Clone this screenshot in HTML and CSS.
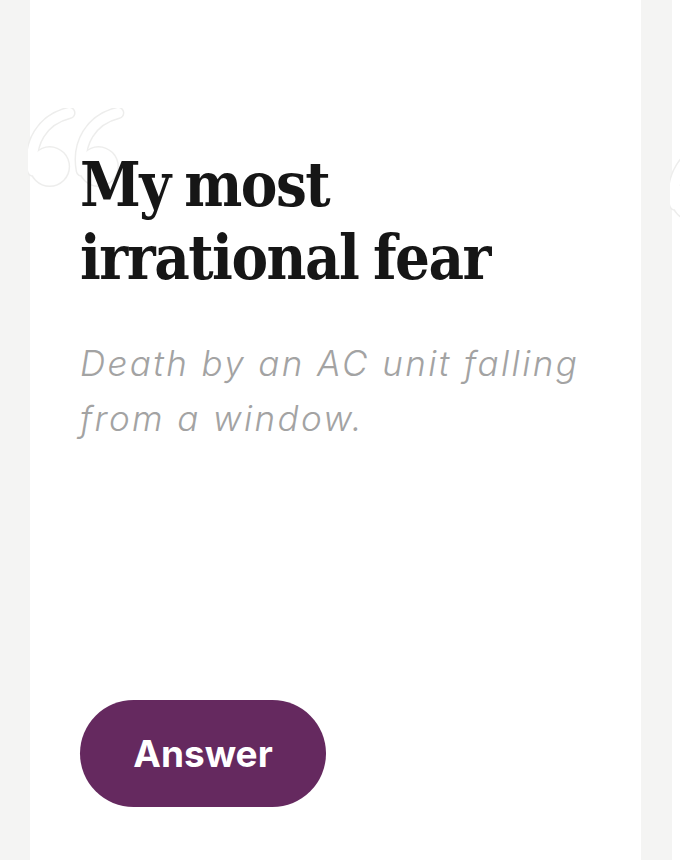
FILE: index.html
```html
<!DOCTYPE html>
<html lang="en">
<head>
<meta charset="utf-8">
<title>My most irrational fear</title>
<link rel="stylesheet" href="styles.css">
</head>
<body>
<div class="track">
  <section class="card">
    <svg class="quote" viewBox="0 0 100 84" aria-hidden="true">
      <g class="q-outer">
        <circle cx="22" cy="60" r="21"/>
        <path d="M5 64 C0 36 14 12 42 5"/>
        <circle cx="72" cy="60" r="21"/>
        <path d="M55 64 C50 36 64 12 92 5"/>
      </g>
      <g class="q-inner">
        <circle cx="22" cy="60" r="19.5"/>
        <path d="M5 64 C0 36 14 12 42 5"/>
        <circle cx="72" cy="60" r="19.5"/>
        <path d="M55 64 C50 36 64 12 92 5"/>
      </g>
    </svg>
    <h1 class="title">My most<br>irrational fear</h1>
    <p class="answer-text">Death by an AC unit falling from a window.</p>
    <button class="answer-btn" type="button">Answer</button>
  </section>
  <section class="card card-next">
    <svg class="quote quote-next" viewBox="0 0 100 84" aria-hidden="true">
      <g class="q-outer">
        <circle cx="22" cy="60" r="21"/>
        <path d="M5 64 C0 36 14 12 42 5"/>
      </g>
      <g class="q-inner">
        <circle cx="22" cy="60" r="19.5"/>
        <path d="M5 64 C0 36 14 12 42 5"/>
      </g>
    </svg>
  </section>
</div>
</body>
</html>
```
FILE: styles.css
```css
html, body {
  margin: 0;
  padding: 0;
  height: 100%;
  background: #f4f4f3;
  overflow: hidden;
}

.track {
  display: flex;
  gap: 31px;
  padding-left: 30px;
  height: 860px;
  width: 680px;
  box-sizing: border-box;
  overflow: hidden;
}

.card {
  position: relative;
  flex: 0 0 611px;
  box-sizing: border-box;
  height: 860px;
  background: #ffffff;
  display: flex;
  flex-direction: column;
  align-items: flex-start;
  padding: 148px 50px 53px 50px;
}

.quote {
  position: absolute;
  left: -2px;
  top: 108px;
  width: 98px;
  height: 82px;
}

.quote-next {
  top: 142px;
}

.q-outer circle { fill: #ededec; }
.q-outer path {
  fill: none;
  stroke: #ededec;
  stroke-width: 13;
  stroke-linecap: round;
}
.q-inner circle { fill: #ffffff; }
.q-inner path {
  fill: none;
  stroke: #ffffff;
  stroke-width: 10;
  stroke-linecap: round;
}

.title {
  position: relative;
  margin: 0;
  font-family: "DejaVu Serif", "Liberation Serif", serif;
  font-stretch: condensed;
  font-weight: 700;
  font-size: 61px;
  line-height: 73px;
  letter-spacing: -1.5px;
  word-spacing: -3px;
  color: #161616;
}

.answer-text {
  margin: 42px 0 0 0;
  font-family: "Inter", "Liberation Sans", sans-serif;
  font-style: italic;
  font-weight: 300;
  font-size: 35px;
  line-height: 55px;
  letter-spacing: 2.4px;
  color: #a3a3a3;
  max-width: 520px;
}

.answer-btn {
  margin-top: auto;
  width: 246px;
  height: 107px;
  border: none;
  border-radius: 54px;
  background: #65295f;
  color: #ffffff;
  font-family: "Inter", "Liberation Sans", sans-serif;
  font-weight: 700;
  font-size: 37px;
  padding: 0;
  cursor: pointer;
}
```
